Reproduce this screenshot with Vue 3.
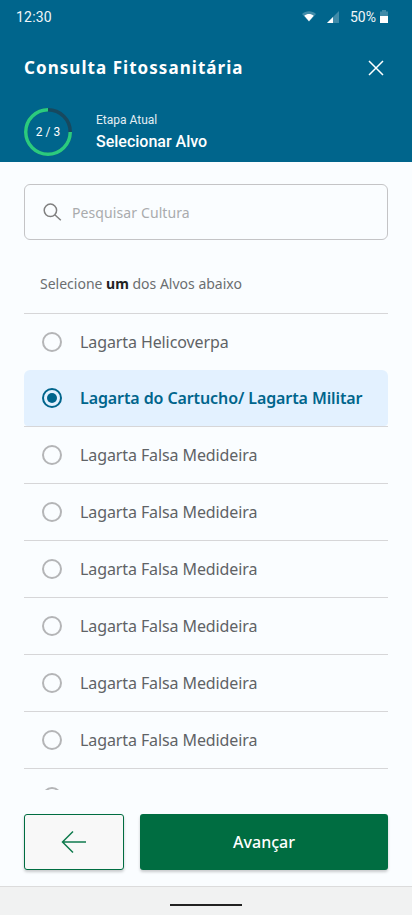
<script setup>
const alvos = [
  { id: 1, nome: 'Lagarta Helicoverpa' },
  { id: 2, nome: 'Lagarta do Cartucho/ Lagarta Militar', selected: true },
  { id: 3, nome: 'Lagarta Falsa Medideira' },
  { id: 4, nome: 'Lagarta Falsa Medideira' },
  { id: 5, nome: 'Lagarta Falsa Medideira' },
  { id: 6, nome: 'Lagarta Falsa Medideira' },
  { id: 7, nome: 'Lagarta Falsa Medideira' },
  { id: 8, nome: 'Lagarta Falsa Medideira' }
]
</script>

<template>
  <div class="screen">
    <header class="header">
      <div class="status-bar">
        <span class="time">12:30</span>
        <div class="status-icons">
          <svg class="wifi" width="14" height="11" viewBox="0 0 16 12">
            <path d="M0 3.2C4.4-.9 11.6-.9 16 3.2L8 12z" fill="#fff" opacity=".25" />
            <path d="M2.6 5.2C5.7 2.6 10.3 2.6 13.4 5.2L8 11.4z" fill="#fff" />
          </svg>
          <svg class="signal" width="12" height="12" viewBox="0 0 12 12">
            <path d="M0 12L12 0v12z" fill="#fff" opacity=".25" />
            <path d="M0 12l6-6v6z" fill="#fff" />
          </svg>
          <span class="battery-text">50%</span>
          <div class="battery"><div class="battery-level"></div></div>
        </div>
      </div>

      <div class="title-row">
        <h1 class="title">Consulta Fitossanitária</h1>
        <svg class="close" width="16" height="16" viewBox="0 0 16 16">
          <path d="M1 1l14 14M15 1L1 15" stroke="#fff" stroke-width="1.5" fill="none" />
        </svg>
      </div>

      <div class="step-row">
        <div class="progress">
          <svg width="48" height="48" viewBox="0 0 48 48">
            <circle cx="24" cy="24" r="22.25" fill="none" stroke="#17495f" stroke-width="3.5" />
            <path d="M46.25 24A22.25 22.25 0 1 1 24 1.75" fill="none" stroke="#2acb7f" stroke-width="3.5" />
          </svg>
          <span class="progress-text">2 / 3</span>
        </div>
        <div class="step-info">
          <span class="step-label">Etapa Atual</span>
          <span class="step-name">Selecionar Alvo</span>
        </div>
      </div>
    </header>

    <main class="content">
      <div class="search">
        <svg width="20" height="20" viewBox="0 0 20 20">
          <circle cx="7.4" cy="8.3" r="6.2" fill="none" stroke="#808080" stroke-width="1.5" />
          <path d="M11.8 12.8l6 5.4" stroke="#808080" stroke-width="1.5" fill="none" />
        </svg>
        <span class="placeholder">Pesquisar Cultura</span>
      </div>

      <p class="hint">Selecione <strong>um</strong> dos Alvos abaixo</p>

      <ul class="list">
        <li v-for="alvo in alvos" :key="alvo.id" class="row" :class="{ selected: alvo.selected }">
          <span class="radio"><span v-if="alvo.selected" class="radio-dot"></span></span>
          <span class="row-text">{{ alvo.nome }}</span>
        </li>
        <li class="row"><span class="radio"></span></li>
      </ul>
    </main>

    <footer class="actions">
      <button class="btn-back">
        <svg width="26" height="24" viewBox="0 0 26 24">
          <path d="M12 1.5L1.5 12 12 22.5M1.5 12H25" stroke="#0f7a4d" stroke-width="1.5" fill="none" />
        </svg>
      </button>
      <button class="btn-next">Avançar</button>
    </footer>

    <div class="nav-bar"><div class="home-indicator"></div></div>
  </div>
</template>

<style scoped>
* { box-sizing: border-box; margin: 0; padding: 0; }

.screen {
  width: 412px;
  height: 915px;
  display: flex;
  flex-direction: column;
  background: #fafdff;
  overflow: hidden;
  font-family: "Noto Sans", sans-serif;
}

.header {
  height: 162px;
  flex-shrink: 0;
  background: #00658c;
  color: #fff;
  padding: 0 24px 0 16px;
}

.status-bar {
  height: 33px;
  display: flex;
  align-items: center;
  justify-content: space-between;
  font-family: Roboto, sans-serif;
  font-size: 14px;
  color: #f1f6f8;
}
.time { letter-spacing: 0.2px; }
.status-icons { display: flex; align-items: center; }
.signal { margin-left: 11px; margin-top: 1px; }
.battery-text { margin-left: 11px; }
.battery {
  width: 8px;
  height: 13px;
  margin-left: 4px;
  display: flex;
  align-items: flex-end;
  background: rgba(255, 255, 255, 0.25);
  clip-path: polygon(25% 0, 75% 0, 75% 12%, 100% 12%, 100% 100%, 0 100%, 0 12%, 25% 12%);
}
.battery-level { width: 100%; height: 7px; background: #fff; }

.title-row {
  height: 70px;
  margin-left: 8px;
  display: flex;
  align-items: center;
  justify-content: space-between;
}
.title {
  font-size: 17px;
  font-weight: 700;
  letter-spacing: 1.05px;
  line-height: 24px;
}
.close { margin-right: 4px; }

.step-row {
  margin-left: 8px;
  margin-top: 5px;
  display: flex;
  align-items: center;
  gap: 24px;
}
.progress {
  width: 48px;
  height: 48px;
  position: relative;
  flex-shrink: 0;
}
.progress svg { display: block; }
.progress-text {
  position: absolute;
  inset: 0;
  display: flex;
  align-items: center;
  justify-content: center;
  font-family: Roboto, sans-serif;
  font-size: 12px;
  white-space: pre;
}
.step-info {
  display: flex;
  flex-direction: column;
  font-family: Roboto, sans-serif;
}
.step-label { font-size: 12px; line-height: 16px; color: #e3eef3; margin-bottom: 3px; }
.step-name { font-size: 16px; line-height: 22px; font-weight: 500; }

.content {
  flex: 1;
  min-height: 0;
  padding: 22px 24px 0;
  display: flex;
  flex-direction: column;
  overflow: hidden;
}

.search {
  height: 56px;
  flex-shrink: 0;
  border: 1px solid #c4c4c6;
  border-radius: 6px;
  display: flex;
  align-items: center;
  padding: 0 18px;
  gap: 9px;
}
.placeholder { font-size: 14px; color: #a9abad; letter-spacing: 0.1px; }

.hint {
  height: 74px;
  flex-shrink: 0;
  padding: 30px 16px 0;
  font-size: 14px;
  line-height: 28px;
  color: #6b6e70;
  border-bottom: 1px solid #d6d6d8;
}
.hint strong { color: #222; font-weight: 700; }

.list {
  list-style: none;
  flex: 1;
  min-height: 0;
  overflow: hidden;
}
.row {
  height: 57px;
  display: flex;
  align-items: center;
  gap: 18px;
  padding: 0 18px 1px;
  border-bottom: 1px solid #d6d6d8;
  font-size: 16px;
  letter-spacing: -0.1px;
  color: #5f6366;
}
.row:first-child {
  height: 56px;
  padding-bottom: 0;
  border-bottom: none;
}
.row.selected {
  color: #00658c;
  font-weight: 600;
  position: relative;
}
.row.selected::before {
  content: "";
  position: absolute;
  inset: 0;
  background: #e3f1ff;
  border-radius: 6px 6px 4px 4px;
}
.row.selected > * { position: relative; }

.radio {
  width: 20px;
  height: 20px;
  flex-shrink: 0;
  border-radius: 50%;
  border: 2px solid #b4b5b7;
  display: flex;
  align-items: center;
  justify-content: center;
}
.selected .radio { border-color: #00658c; }
.radio-dot { width: 10px; height: 10px; border-radius: 50%; background: #00658c; }

.actions {
  flex-shrink: 0;
  height: 97px;
  display: flex;
  gap: 16px;
  padding: 24px 24px 16px;
  border-bottom: 1px solid #dcdcdc;
}
.actions button { font-family: inherit; cursor: pointer; box-shadow: 0 2px 3px rgba(0, 0, 0, 0.2); }
.btn-back {
  width: 100px;
  border: 1px solid #006d41;
  border-radius: 3px;
  background: #f8f8f8;
  display: flex;
  align-items: center;
  justify-content: center;
}
.btn-next {
  flex: 1;
  border: none;
  border-radius: 3px;
  background: #006d41;
  color: #fff;
  font-size: 16px;
  font-weight: 500;
}

.nav-bar {
  height: 28px;
  flex-shrink: 0;
  background: #f1f2f2;
  display: flex;
  justify-content: center;
  align-items: flex-end;
  padding-bottom: 9px;
}
.home-indicator { width: 72px; height: 2px; background: #222; }
</style>
